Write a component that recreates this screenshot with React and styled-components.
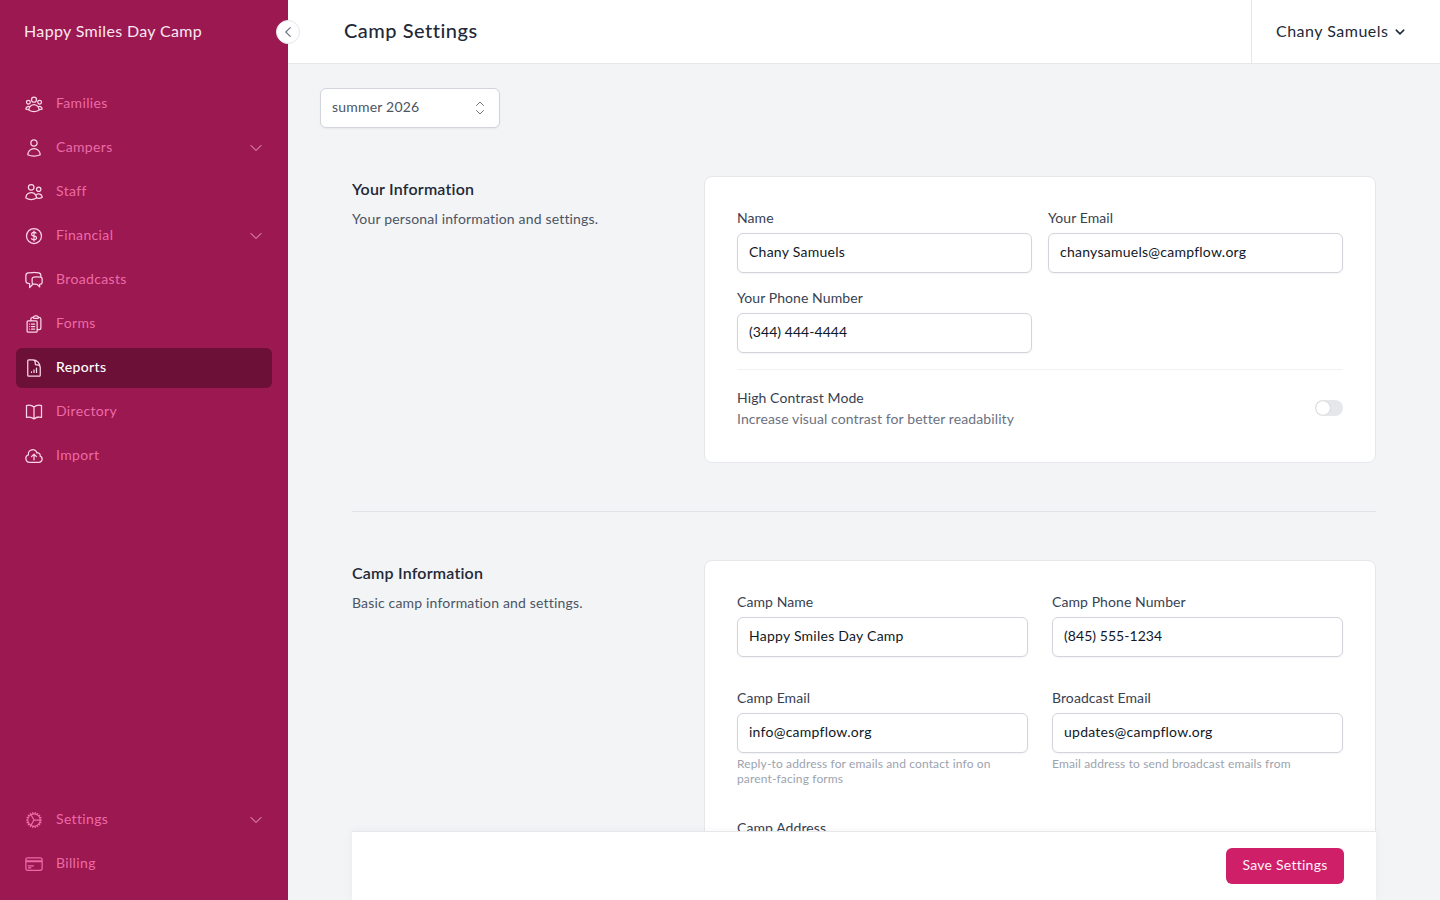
import React from "react";
import styled, { createGlobalStyle } from "styled-components";
import {
  HiOutlineUserGroup,
  HiOutlineUser,
  HiOutlineUsers,
  HiOutlineCurrencyDollar,
  HiOutlineChatBubbleLeftRight,
  HiOutlineClipboardDocumentList,
  HiOutlineDocumentChartBar,
  HiOutlineBookOpen,
  HiOutlineCloudArrowUp,
  HiOutlineCog,
  HiOutlineCreditCard,
  HiOutlineChevronDown,
  HiOutlineChevronLeft,
} from "react-icons/hi2";

const mainNav = [
  { label: "Families", icon: HiOutlineUserGroup },
  { label: "Campers", icon: HiOutlineUser, expandable: true },
  { label: "Staff", icon: HiOutlineUsers },
  { label: "Financial", icon: HiOutlineCurrencyDollar, expandable: true },
  { label: "Broadcasts", icon: HiOutlineChatBubbleLeftRight },
  { label: "Forms", icon: HiOutlineClipboardDocumentList },
  { label: "Reports", icon: HiOutlineDocumentChartBar, active: true },
  { label: "Directory", icon: HiOutlineBookOpen },
  { label: "Import", icon: HiOutlineCloudArrowUp },
];

const bottomNav = [
  { label: "Settings", icon: HiOutlineCog, expandable: true, dim: true },
  { label: "Billing", icon: HiOutlineCreditCard, dim: true },
];

function NavList({ items }) {
  return (
    <NavGroup>
      {items.map((item) => (
        <NavItem key={item.label} $active={item.active}>
          <NavIcon $dim={item.dim}>
            <item.icon size={20} />
          </NavIcon>
          <NavLabel>{item.label}</NavLabel>
          {item.expandable && (
            <NavChevron>
              <HiOutlineChevronDown size={16} />
            </NavChevron>
          )}
        </NavItem>
      ))}
    </NavGroup>
  );
}

function Field({ label, value, help, phone }) {
  return (
    <FieldWrap>
      <FieldLabel>{label}</FieldLabel>
      <TextInput defaultValue={value} $phone={phone} />
      {help && <HelpText>{help}</HelpText>}
    </FieldWrap>
  );
}

export default function App() {
  return (
    <>
      <GlobalStyle />
      <Layout>
        <Sidebar>
          <Brand>Happy Smiles Day Camp</Brand>
          <NavList items={mainNav} />
          <NavSpacer />
          <NavList items={bottomNav} />
          <CollapseButton>
            <HiOutlineChevronLeft size={14} strokeWidth={2} />
          </CollapseButton>
        </Sidebar>

        <Main>
          <Header>
            <PageTitle>Camp Settings</PageTitle>
            <UserMenu>
              <UserName>Chany Samuels</UserName>
              <HiOutlineChevronDown size={12} strokeWidth={3} />
            </UserMenu>
          </Header>

          <Scroll>
            <SeasonSelect>
              <SeasonValue>summer 2026</SeasonValue>
              <svg width="16" height="20" viewBox="0 0 16 20" fill="none" stroke="#6b7280" strokeWidth="1" strokeLinecap="round" strokeLinejoin="round">
                <path d="M4.5 7.5 8 4l3.5 3.5" />
                <path d="M4.5 12.5 8 16l3.5-3.5" />
              </svg>
            </SeasonSelect>

            <Sections>
              <Section>
                <SectionInfo>
                  <SectionTitle>Your Information</SectionTitle>
                  <SectionText>Your personal information and settings.</SectionText>
                </SectionInfo>
                <Card>
                  <PersonalGrid>
                    <Field label="Name" value="Chany Samuels" />
                    <Field label="Your Email" value="chanysamuels@campflow.org" />
                    <Field label="Your Phone Number" value="(344) 444-4444" phone />
                  </PersonalGrid>
                  <ToggleRow>
                    <div>
                      <ToggleTitle>High Contrast Mode</ToggleTitle>
                      <ToggleText>Increase visual contrast for better readability</ToggleText>
                    </div>
                    <Toggle />
                  </ToggleRow>
                </Card>
              </Section>

              <SectionDivider />

              <Section>
                <SectionInfo>
                  <SectionTitle>Camp Information</SectionTitle>
                  <SectionText>Basic camp information and settings.</SectionText>
                </SectionInfo>
                <Card>
                  <CampGrid>
                    <Field label="Camp Name" value="Happy Smiles Day Camp" />
                    <Field label="Camp Phone Number" value="(845) 555-1234" phone />
                    <Field
                      label="Camp Email"
                      value="info@campflow.org"
                      help="Reply-to address for emails and contact info on parent-facing forms"
                    />
                    <Field
                      label="Broadcast Email"
                      value="updates@campflow.org"
                      help="Email address to send broadcast emails from"
                    />
                    <Field label="Camp Address" value="" />
                  </CampGrid>
                </Card>
              </Section>

              <SaveBar>
                <SaveButton>Save Settings</SaveButton>
              </SaveBar>
            </Sections>
          </Scroll>
        </Main>
      </Layout>
    </>
  );
}

const GlobalStyle = createGlobalStyle`
  * {
    box-sizing: border-box;
  }

  html,
  body {
    margin: 0;
    height: 100%;
    overflow: hidden;
  }

  body {
    font-family: "Lato", "Noto Sans", sans-serif;
    font-size: 14px;
    background-color: #f3f4f6;
  }

  input,
  button {
    font-family: inherit;
  }
`;

const Layout = styled.div`
  display: flex;
  width: 100vw;
  height: 100vh;
`;

const Sidebar = styled.aside`
  position: relative;
  z-index: 2;
  display: flex;
  flex-direction: column;
  flex: 0 0 288px;
  height: 100%;
  padding: 0 16px 16px;
  background-color: #9b1850;
`;

const Brand = styled.div`
  display: flex;
  align-items: center;
  height: 64px;
  margin-bottom: 20px;
  padding: 0 0 4px 8px;
  font-size: 16px;
  letter-spacing: 0.35px;
  color: #fce7f3;
`;

const NavGroup = styled.nav`
  display: flex;
  flex-direction: column;
  gap: 4px;
`;

const NavSpacer = styled.div`
  flex: 1;
`;

const NavItem = styled.div`
  display: flex;
  align-items: center;
  height: 40px;
  padding: 0 8px;
  border-radius: 6px;
  font-weight: ${(p) => (p.$active ? 500 : 400)};
  letter-spacing: 0.35px;
  color: ${(p) => (p.$active ? "#ffffff" : "#ee6aa7")};
  background-color: ${(p) => (p.$active ? "#6c1038" : "transparent")};
`;

const NavIcon = styled.span`
  display: flex;
  margin-right: 12px;
  color: ${(p) => (p.$dim ? "#ee6aa7" : "#fbd5e8")};
`;

const NavLabel = styled.span`
  flex: 1;
  padding-bottom: 4px;
`;

const NavChevron = styled.span`
  display: flex;
  color: #f9a8d4;
`;

const CollapseButton = styled.button`
  position: absolute;
  top: 20px;
  right: -12px;
  display: flex;
  align-items: center;
  justify-content: center;
  width: 24px;
  height: 24px;
  padding: 0;
  border: 1px solid #e5e7eb;
  border-radius: 50%;
  color: #6b7280;
  background-color: #ffffff;
`;

const Main = styled.div`
  display: flex;
  flex-direction: column;
  flex: 1;
  min-width: 0;
  height: 100%;
`;

const Header = styled.header`
  display: flex;
  align-items: stretch;
  justify-content: space-between;
  flex: 0 0 64px;
  border-bottom: 1px solid #e5e7eb;
  background-color: #ffffff;
`;

const PageTitle = styled.h1`
  align-self: center;
  margin: 0 0 4px 56px;
  font-size: 20px;
  font-weight: 500;
  letter-spacing: 0.5px;
  color: #1f2937;
`;

const UserMenu = styled.div`
  display: flex;
  align-items: center;
  gap: 5px;
  width: 189px;
  padding-left: 24px;
  border-left: 1px solid #e5e7eb;
  font-size: 16px;
  letter-spacing: 0.5px;
  color: #1f2937;
`;

const UserName = styled.span`
  padding-bottom: 2px;
`;

const Scroll = styled.div`
  flex: 1;
  min-height: 0;
  padding: 24px 32px 0;
  overflow-y: auto;
  scrollbar-width: none;
`;

const SeasonSelect = styled.div`
  display: flex;
  align-items: center;
  justify-content: space-between;
  width: 180px;
  height: 40px;
  padding: 0 11px;
  border: 1px solid #d1d5db;
  border-radius: 6px;
  letter-spacing: 0.2px;
  color: #4b5563;
  background-color: #ffffff;
  box-shadow: 0 1px 2px rgba(0, 0, 0, 0.05);
`;

const SeasonValue = styled.span`
  padding-bottom: 4px;
`;

const Sections = styled.div`
  margin: 48px 32px 0;
`;

const Section = styled.section`
  display: grid;
  grid-template-columns: 352px 1fr;
`;

const SectionInfo = styled.div``;

const SectionTitle = styled.h2`
  margin: 1px 0 8px;
  font-size: 16px;
  font-weight: 600;
  line-height: 24px;
  letter-spacing: 0.2px;
  color: #1f2937;
`;

const SectionText = styled.p`
  margin: 0;
  line-height: 20px;
  letter-spacing: 0.17px;
  color: #4b5563;
`;

const SectionDivider = styled.div`
  margin: 48px 0;
  border-top: 1px solid #e0e3e8;
`;

const Card = styled.div`
  padding: 32px;
  border: 1px solid #e5e7eb;
  border-radius: 8px;
  background-color: #ffffff;
`;

const PersonalGrid = styled.div`
  display: grid;
  grid-template-columns: 1fr 1fr;
  gap: 16px;
`;

const CampGrid = styled.div`
  display: grid;
  grid-template-columns: 1fr 1fr;
  gap: 32px 24px;
`;

const FieldWrap = styled.div`
  display: flex;
  flex-direction: column;
`;

const FieldLabel = styled.label`
  margin-bottom: 6px;
  line-height: 18px;
  letter-spacing: 0.08px;
  color: #374151;
`;

const TextInput = styled.input`
  width: 100%;
  height: 40px;
  padding: 0 11px 4px;
  border: 1px solid #d1d5db;
  border-radius: 6px;
  font-size: 14px;
  letter-spacing: ${(p) => (p.$phone ? "0.05px" : "0.25px")};
  color: #111827;
  background-color: #ffffff;
  box-shadow: 0 1px 2px rgba(0, 0, 0, 0.05);
`;

const HelpText = styled.p`
  margin: 3px 0 1px;
  font-size: 12px;
  line-height: 15px;
  letter-spacing: 0.14px;
  color: #9ca3af;
`;

const ToggleRow = styled.div`
  display: flex;
  align-items: center;
  justify-content: space-between;
  margin-top: 16px;
  padding-top: 20px;
  border-top: 1px solid #f0f1f3;
`;

const ToggleTitle = styled.div`
  margin-bottom: 4px;
  line-height: 16px;
  letter-spacing: 0.1px;
  color: #374151;
`;

const ToggleText = styled.div`
  margin-bottom: 2px;
  line-height: 18px;
  letter-spacing: 0.1px;
  color: #6b7280;
`;

const Toggle = styled.span`
  position: relative;
  flex: 0 0 28px;
  height: 16px;
  margin-bottom: 4px;
  border-radius: 8px;
  background-color: #e5e7eb;

  &::after {
    content: "";
    position: absolute;
    top: 1px;
    left: 1px;
    width: 14px;
    height: 14px;
    border-radius: 50%;
    background-color: #ffffff;
    box-shadow: 0 0 1px rgba(0, 0, 0, 0.3);
  }
`;

const SaveBar = styled.div`
  position: sticky;
  bottom: 0;
  display: flex;
  justify-content: flex-end;
  height: 69px;
  margin-top: 32px;
  padding: 16px 32px;
  border-top: 1px solid #e5e7eb;
  background-color: #ffffff;
  box-shadow: 0 0 8px rgba(0, 0, 0, 0.05);
`;

const SaveButton = styled.button`
  width: 118px;
  height: 36px;
  padding: 0 0 4px;
  border: none;
  border-radius: 6px;
  font-size: 14px;
  letter-spacing: 0.25px;
  color: #fdf2f8;
  background-color: #cf1f69;
`;
